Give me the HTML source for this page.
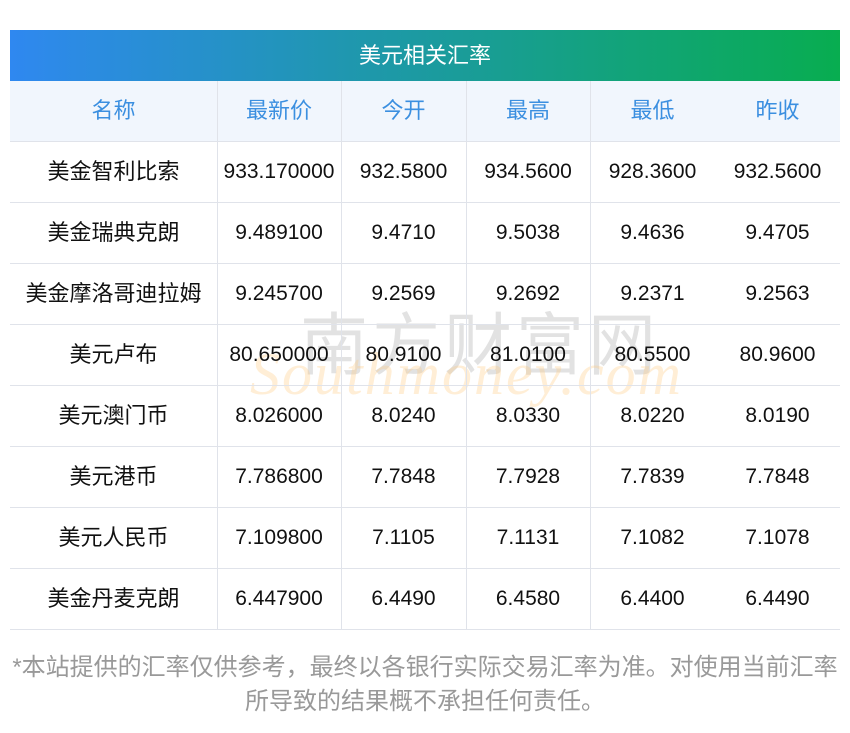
<!DOCTYPE html><html><head><meta charset="utf-8"><style>
body{margin:0;width:850px;height:733px;background:#fff;font-family:"Liberation Sans","Noto Sans CJK SC",sans-serif;position:relative;overflow:hidden}
.hd{position:absolute;left:10px;top:30px;width:830px;height:51px;background:linear-gradient(90deg,#2f88f0,#08ad50);color:#fff;font-size:22px;text-align:center;line-height:51px}
.row{position:absolute;left:10px;width:830px;height:61px;border-bottom:1px solid #e0e3ea;box-sizing:border-box}
.c{position:absolute;top:0;height:60px;line-height:60px;text-align:center;font-size:21px;color:#111}
.n{font-size:22px}
.h .c{color:#3b8fe0;font-size:22px}
.v{position:absolute;width:1px;background:#e0e3ea;top:81px;height:549px}
.wm{position:absolute;font-size:68px;color:rgba(160,160,160,.3);left:300px;top:290px;letter-spacing:4px}
.wm2{position:absolute;font-size:60px;font-style:italic;font-family:"Liberation Serif",serif;color:rgba(255,200,120,.3);left:250px;top:340px;letter-spacing:2px}
.ft{position:absolute;left:0;width:850px;top:651px;text-align:center;font-size:24px;color:#999;line-height:34px}
</style></head><body>
<div class="hd">美元相关汇率</div>
<div class="row h" style="top:81px;background:#f1f6fd">
<div class="c" style="left:0;width:207px">名称</div><div class="c" style="left:207px;width:124px">最新价</div><div class="c" style="left:331px;width:125px">今开</div><div class="c" style="left:456px;width:124px">最高</div><div class="c" style="left:580px;width:125px">最低</div><div class="c" style="left:705px;width:125px">昨收</div></div>
<div class="wm">南方财富网</div><div class="wm2">Southmoney.com</div>
<div class="v" style="left:217px"></div><div class="v" style="left:341px"></div><div class="v" style="left:466px"></div><div class="v" style="left:590px"></div>
<div class="row" style="top:142px"><div class="c n" style="left:0;width:207px">美金智利比索</div><div class="c" style="left:207px;width:124px">933.170000</div><div class="c" style="left:331px;width:125px">932.5800</div><div class="c" style="left:456px;width:124px">934.5600</div><div class="c" style="left:580px;width:125px">928.3600</div><div class="c" style="left:705px;width:125px">932.5600</div></div>
<div class="row" style="top:203px"><div class="c n" style="left:0;width:207px">美金瑞典克朗</div><div class="c" style="left:207px;width:124px">9.489100</div><div class="c" style="left:331px;width:125px">9.4710</div><div class="c" style="left:456px;width:124px">9.5038</div><div class="c" style="left:580px;width:125px">9.4636</div><div class="c" style="left:705px;width:125px">9.4705</div></div>
<div class="row" style="top:264px"><div class="c n" style="left:0;width:207px">美金摩洛哥迪拉姆</div><div class="c" style="left:207px;width:124px">9.245700</div><div class="c" style="left:331px;width:125px">9.2569</div><div class="c" style="left:456px;width:124px">9.2692</div><div class="c" style="left:580px;width:125px">9.2371</div><div class="c" style="left:705px;width:125px">9.2563</div></div>
<div class="row" style="top:325px"><div class="c n" style="left:0;width:207px">美元卢布</div><div class="c" style="left:207px;width:124px">80.650000</div><div class="c" style="left:331px;width:125px">80.9100</div><div class="c" style="left:456px;width:124px">81.0100</div><div class="c" style="left:580px;width:125px">80.5500</div><div class="c" style="left:705px;width:125px">80.9600</div></div>
<div class="row" style="top:386px"><div class="c n" style="left:0;width:207px">美元澳门币</div><div class="c" style="left:207px;width:124px">8.026000</div><div class="c" style="left:331px;width:125px">8.0240</div><div class="c" style="left:456px;width:124px">8.0330</div><div class="c" style="left:580px;width:125px">8.0220</div><div class="c" style="left:705px;width:125px">8.0190</div></div>
<div class="row" style="top:447px"><div class="c n" style="left:0;width:207px">美元港币</div><div class="c" style="left:207px;width:124px">7.786800</div><div class="c" style="left:331px;width:125px">7.7848</div><div class="c" style="left:456px;width:124px">7.7928</div><div class="c" style="left:580px;width:125px">7.7839</div><div class="c" style="left:705px;width:125px">7.7848</div></div>
<div class="row" style="top:508px"><div class="c n" style="left:0;width:207px">美元人民币</div><div class="c" style="left:207px;width:124px">7.109800</div><div class="c" style="left:331px;width:125px">7.1105</div><div class="c" style="left:456px;width:124px">7.1131</div><div class="c" style="left:580px;width:125px">7.1082</div><div class="c" style="left:705px;width:125px">7.1078</div></div>
<div class="row" style="top:569px"><div class="c n" style="left:0;width:207px">美金丹麦克朗</div><div class="c" style="left:207px;width:124px">6.447900</div><div class="c" style="left:331px;width:125px">6.4490</div><div class="c" style="left:456px;width:124px">6.4580</div><div class="c" style="left:580px;width:125px">6.4400</div><div class="c" style="left:705px;width:125px">6.4490</div></div>
<div class="ft">*本站提供的汇率仅供参考，最终以各银行实际交易汇率为准。对使用当前汇率<br>所导致的结果概不承担任何责任。</div>
</body></html>
